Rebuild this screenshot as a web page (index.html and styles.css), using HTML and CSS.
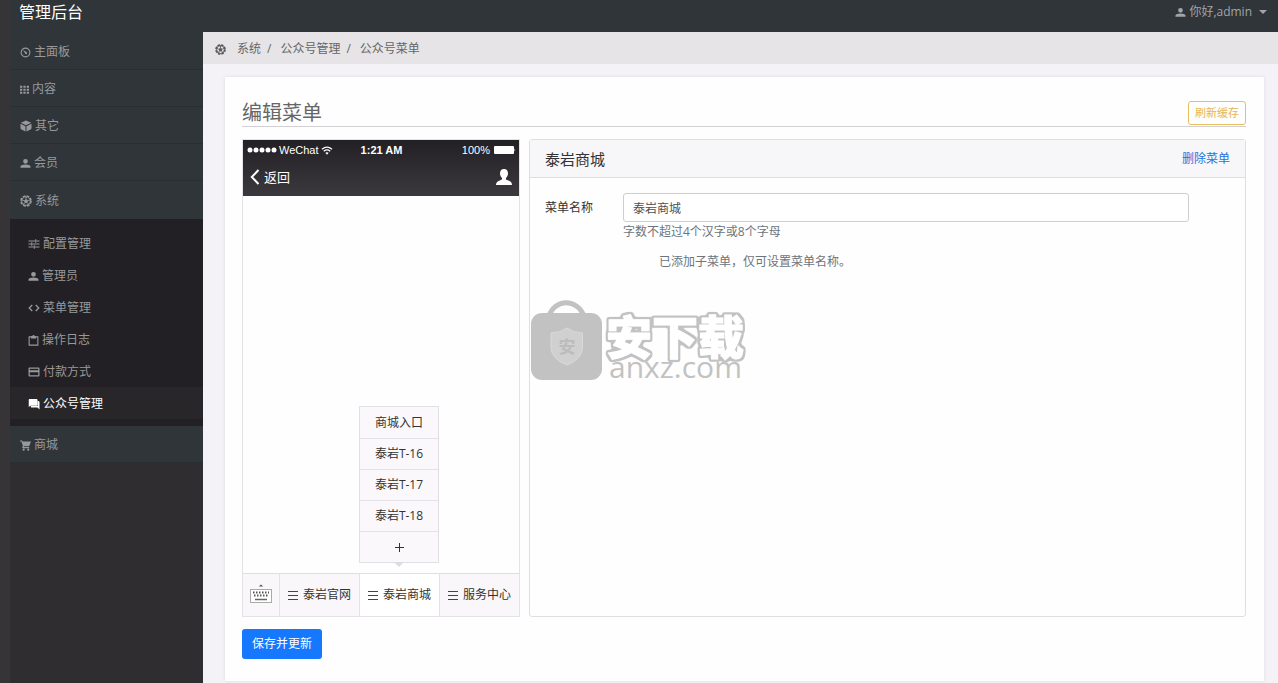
FILE: index.html
```
<!DOCTYPE html>
<html lang="zh-CN">
<head>
<meta charset="utf-8">
<title>管理后台</title>
<link rel="stylesheet" href="styles.css">
</head>
<body>
<svg class="defs" aria-hidden="true">
  <filter id="outline" x="-10%" y="-20%" width="120%" height="140%">
    <feMorphology in="SourceAlpha" operator="dilate" radius="2" result="wide"/>
    <feGaussianBlur in="wide" stdDeviation="0.8" result="soft"/>
    <feComponentTransfer in="soft" result="edge"><feFuncA type="linear" slope="3" intercept="-0.8"/></feComponentTransfer>
    <feFlood flood-color="#c2c2c2"/>
    <feComposite in2="edge" operator="in" result="grey"/>
    <feMerge><feMergeNode in="grey"/><feMergeNode in="SourceGraphic"/></feMerge>
  </filter>
  <symbol id="i-dash" viewBox="0 0 24 24"><circle cx="12" cy="12" r="9.5" fill="none" stroke="currentColor" stroke-width="2.4"/><path d="M6.500 6.500l7.300 4.200a2.300 2.300 0 1 1-2.800 3z" fill="currentColor"/></symbol>
  <symbol id="i-grid" viewBox="0 0 24 24"><path d="M0 2h6v5H0zM9 2h6v5H9zM18 2h6v5h-6zM0 10h6v5H0zM9 10h6v5H9zM18 10h6v5h-6zM0 18h6v5H0zM9 18h6v5H9zM18 18h6v5h-6z" fill="currentColor"/></symbol>
  <symbol id="i-cube" viewBox="0 0 24 24"><path d="M12 1l10.500 4.500L12 10.500 1.500 5.500zM1 7.500l10 4.800V23L3 19.200Q1 18 1 16zM23 7.500l-10 4.800V23l8-3.800q2-1.200 2-3.200z" fill="currentColor"/></symbol>
  <symbol id="i-user" viewBox="0 0 24 24"><path d="M12 2a5.200 5.200 0 0 1 0 10.400a5.200 5.200 0 0 1 0-10.400zM1 21.500v-3c0-3 5.500-4.500 11-4.500s11 1.500 11 4.500v3z" fill="currentColor"/></symbol>
  <symbol id="i-wheel" viewBox="0 0 24 24"><circle cx="12" cy="12" r="10" fill="none" stroke="currentColor" stroke-width="3.200" stroke-dasharray="5.400 2.460"/><circle cx="12" cy="12" r="8.500" fill="none" stroke="currentColor" stroke-width="2"/><path d="M12 9l3 2-1 4h-4l-1-4zM12 3v6M3.500 9.500l5 2M20.500 9.500l-5 2M6.500 19l3.500-4M17.500 19L14 15" fill="currentColor" stroke="currentColor" stroke-width="1.800"/></symbol>
  <symbol id="i-tune" viewBox="0 0 24 24"><path d="M1 6h13M17 6h6M1 12h5M9 12h14M1 18h10M14 18h9M15.500 2.500v7M7.500 8.500v7M12.500 14.500v7" fill="none" stroke="currentColor" stroke-width="2.200"/></symbol>
  <symbol id="i-code" viewBox="0 0 24 24"><path d="M8.500 6L2.500 12l6 6M15.500 6l6 6-6 6" fill="none" stroke="currentColor" stroke-width="2.600"/></symbol>
  <symbol id="i-clip" viewBox="0 0 24 24"><path d="M2.500 4h19v18h-19z" fill="none" stroke="currentColor" stroke-width="2.400"/><path d="M6.500 2.500h3a2.500 2.500 0 0 1 5 0h3v5h-11z" fill="currentColor"/></symbol>
  <symbol id="i-card" viewBox="0 0 24 24"><path d="M3 3h18q2 0 2 2v14q0 2-2 2H3q-2 0-2-2V5q0-2 2-2zM3.500 5.500v3h17v-3zM3.500 12.500v6h17v-6z" fill="currentColor" fill-rule="evenodd"/></symbol>
  <symbol id="i-chat" viewBox="0 0 24 24"><path d="M3 2h14q2 0 2 2v10q0 1.500-1.500 1.500H5L1.500 18V4q0-2 1.500-2zM19.500 6q3.500 0 3.500 2v15l-4-4H7q-1.500 0-1.500-3h14z" fill="currentColor"/></symbol>
  <symbol id="i-cart" viewBox="0 0 24 24"><path d="M0 1h4.500l1 2.500H24l-4 10H9l-1 2h12V18H6q-2-.5-1-2.500l1.500-2.500L3 3.500H0z" fill="currentColor"/><circle cx="8" cy="21" r="2.400" fill="currentColor"/><circle cx="18" cy="21" r="2.400" fill="currentColor"/></symbol>
</svg>
<div class="app">
  <header class="topbar">
    <a class="brand" href="#">管理后台</a>
    <button class="account" type="button"><svg class="icon"><use href="#i-user"/></svg>你好,admin<span class="caret"></span></button>
  </header>
  <nav class="sidebar" aria-label="主导航">
    <div class="nav-group">
      <a class="nav-item" href="#"><svg class="icon"><use href="#i-dash"/></svg>主面板</a>
      <a class="nav-item" href="#"><svg class="icon icon-sm"><use href="#i-grid"/></svg>内容</a>
      <a class="nav-item" href="#"><svg class="icon icon-lg"><use href="#i-cube"/></svg>其它</a>
      <a class="nav-item" href="#"><svg class="icon"><use href="#i-user"/></svg>会员</a>
      <a class="nav-item" href="#"><svg class="icon icon-lg"><use href="#i-wheel"/></svg>系统</a>
    </div>
    <div class="subnav">
      <a class="sub-item" href="#"><svg class="icon icon-lg"><use href="#i-tune"/></svg>配置管理</a>
      <a class="sub-item" href="#"><svg class="icon"><use href="#i-user"/></svg>管理员</a>
      <a class="sub-item" href="#"><svg class="icon icon-lg"><use href="#i-code"/></svg>菜单管理</a>
      <a class="sub-item" href="#"><svg class="icon"><use href="#i-clip"/></svg>操作日志</a>
      <a class="sub-item" href="#"><svg class="icon icon-lg"><use href="#i-card"/></svg>付款方式</a>
      <a class="sub-item active" href="#"><svg class="icon icon-lg"><use href="#i-chat"/></svg>公众号管理</a>
    </div>
    <a class="nav-item" href="#"><svg class="icon"><use href="#i-cart"/></svg>商城</a>
  </nav>
  <main class="main">
    <nav class="crumbs" aria-label="面包屑">
      <svg class="icon"><use href="#i-wheel"/></svg>
      <a href="#">系统</a><span class="sep">/</span><a href="#">公众号管理</a><span class="sep">/</span><span>公众号菜单</span>
    </nav>
    <section class="card">
      <div class="card-head">
        <h1>编辑菜单</h1>
        <button class="refresh" type="button">刷新缓存</button>
      </div>
      <div class="editor">
        <div class="phone">
          <div class="phone-top">
            <div class="status">
              <span class="carrier"><svg class="dots" viewBox="0 0 30 6"><g fill="#fff"><circle cx="3" cy="3" r="2.500"/><circle cx="9" cy="3" r="2.500"/><circle cx="15" cy="3" r="2.500"/><circle cx="21" cy="3" r="2.500"/><circle cx="27" cy="3" r="2.500"/></g></svg>WeChat<svg class="wifi" viewBox="0 0 12 9"><path d="M1 3.200q5-4 10 0M2.800 5.200q3.200-2.500 6.400 0" fill="none" stroke="#fff" stroke-width="1.300"/><path d="M4.300 6.800q1.700-1.300 3.400 0L6 8.700z" fill="#fff"/></svg></span>
              <b>1:21 AM</b>
              <span class="power">100%<svg class="battery" viewBox="0 0 22 8"><rect width="20" height="8" rx="1" fill="#fff"/><path d="M20.500 2.500q1.500 1.500 0 3z" fill="#fff"/></svg></span>
            </div>
            <div class="phone-nav">
              <span class="back"><svg class="chevron" viewBox="0 0 10 16"><path d="M8.500 1L1.800 8l6.700 7" fill="none" stroke="#fff" stroke-width="2"/></svg>返回</span>
              <svg class="person" viewBox="0 0 16 16"><path d="M8 0c2.800 0 4 2 4 4.300 0 2-.8 3.500-2 4.700v1.500c2 1 6 1.600 6 5.500H0c0-3.900 4-4.500 6-5.500V9C4.800 7.800 4 6.300 4 4.300 4 2 5.200 0 8 0z" fill="#fff"/></svg>
            </div>
          </div>
          <div class="phone-body"></div>
          <div class="menubar">
            <button class="kbd" type="button" aria-label="键盘"><svg viewBox="0 0 22 19"><path d="M8.800 2.600L11 .5l2.200 2.100z" fill="#555"/><rect x=".5" y="5.500" width="21" height="13" fill="#fff" stroke="#aaa"/><path d="M3 8.500h16M4 11.500h14" stroke="#555" stroke-width="2" stroke-dasharray="1.500 1.500"/><path d="M5 15.500h12" stroke="#666" stroke-width="1.500"/></svg></button>
            <div class="menu-cell"><button class="menu-btn" type="button"><span class="bars"></span>泰岩官网</button></div>
            <div class="menu-cell current">
              <button class="menu-btn" type="button"><span class="bars"></span>泰岩商城</button>
              <div class="popup">
                <button type="button">商城入口</button>
                <button type="button">泰岩T-16</button>
                <button type="button">泰岩T-17</button>
                <button type="button">泰岩T-18</button>
                <button type="button" aria-label="添加子菜单"><svg class="plus" viewBox="0 0 9 9"><path d="M4.500 0v9M0 4.500h9" stroke="#333"/></svg></button>
              </div>
            </div>
            <div class="menu-cell"><button class="menu-btn" type="button"><span class="bars"></span>服务中心</button></div>
          </div>
        </div>
        <div class="panel">
          <div class="panel-head"><h2>泰岩商城</h2><a href="#">删除菜单</a></div>
          <form class="panel-body">
            <label for="menu-name">菜单名称</label>
            <div class="field">
              <input id="menu-name" type="text" value="泰岩商城">
              <p class="hint">字数不超过4个汉字或8个字母</p>
              <p class="note">已添加子菜单，仅可设置菜单名称。</p>
            </div>
          </form>
        </div>
      </div>
      <button class="save" type="button">保存并更新</button>
    </section>
  </main>
  <svg class="watermark" viewBox="0 0 220 84" aria-hidden="true">
    <path d="M17.500 17C24-2 46-2 53.500 17" fill="none" stroke="#c2c2c2" stroke-width="5"/>
    <rect x="0" y="13" width="71" height="67" rx="11" fill="#c2c2c2"/>
    <path d="M36 28q7 5 15.500 5v14q0 12-15.500 18Q20 59 20 47V33q9 0 16-5z" fill="#d0d0d0" stroke="#dadada"/>
    <text x="36" y="53" text-anchor="middle" class="bag-char">安</text>
    <text x="75" y="54" class="mark-cn" filter="url(#outline)">安下载</text>
    <text x="78" y="78" class="mark-en">anxz.com</text>
  </svg>
</div>
</body>
</html>
```
FILE: styles.css
```
* { box-sizing: border-box; }
body {
  margin: 0;
  background: #f4f2f6;
  color: #333;
  font: 12px/18px "Open Sans", "Noto Sans CJK SC", sans-serif;
}
button, input { font: inherit; color: inherit; margin: 0; }
button { border: 0; padding: 0; background: none; cursor: pointer; }
a { color: inherit; text-decoration: none; }
h1, h2, p { margin: 0; font-weight: 400; }
.defs { position: absolute; width: 0; height: 0; }
.app {
  position: relative;
  display: grid;
  grid-template: 32px 1fr / 193px minmax(0, 1fr);
  min-height: 100vh;
  border-left: 10px solid #363437;
}
.topbar {
  grid-column: 1 / -1;
  display: flex;
  justify-content: space-between;
  align-items: center;
  padding: 0 11px 8px 9px;
  background: #30353a;
}
.brand { color: #fff; font-size: 16px; line-height: 24px; }
.account { display: flex; align-items: center; gap: 3px; color: #a2a4a7; }
.caret { margin-left: 4px; border: 4px solid transparent; border-top-color: #a2a4a7; border-bottom: 0; }
.icon { width: 11px; height: 11px; flex: none; }
.icon-sm { width: 9px; height: 9px; }
.icon-lg { width: 12px; height: 12px; }

.sidebar { background: #2f2d30; color: #98999b; }
.nav-group { padding: 1px 0; background: #30353a; }
.nav-item {
  display: flex;
  align-items: center;
  gap: 3px;
  height: 37px;
  padding: 2px 0 0 10px;
  background: #30353a;
  border-bottom: 1px solid #2a2e32;
}
.nav-group .nav-item:last-child { border-bottom: 0; }
.subnav { padding: 8px 0 7px; background: #222024; }
.sub-item { display: flex; align-items: center; gap: 3px; height: 32px; padding: 2px 0 0 18px; }
.sub-item.active { background: #282629; color: #fff; }

.main { padding-bottom: 2px; }
.crumbs {
  display: flex;
  align-items: center;
  height: 32px;
  padding: 2px 0 0 12px;
  background: #e6e4e7;
  color: #666;
}
.crumbs .icon { margin-right: 11px; color: #555; }
.sep { margin: 0 9px 0 6px; }
.card {
  margin: 13px 14px 0 22px;
  padding: 21px 18px 22px 17px;
  background: #fefefe;
  box-shadow: 0 0 3px #dddbdf;
}
.card-head {
  display: flex;
  justify-content: space-between;
  align-items: center;
  height: 29px;
  padding-top: 2px;
  margin-bottom: 12px;
  border-bottom: 1px solid #d2d0d4;
}
h1 { font-size: 20px; line-height: 28px; color: #666; }
.refresh {
  height: 24px;
  padding: 0 6px;
  border: 1px solid #e8c060;
  border-radius: 3px;
  color: #e8b550;
  font-size: 11px;
  line-height: 16px;
}
.editor { display: flex; gap: 9px; height: 478px; }
.phone { display: flex; flex-direction: column; width: 278px; flex: none; border: 1px solid #e4e2e6; }
.phone-top {
  background: linear-gradient(#222024, #3b393d);
  color: #fff;
  height: 56px;
}
.status {
  display: grid;
  grid-template-columns: 1fr auto 1fr;
  align-items: center;
  height: 20px;
  padding: 0 3px 0 4px;
  font: 11px/16px "Liberation Sans", Arial, sans-serif;
}
.carrier, .power { display: flex; align-items: center; }
.power { justify-content: flex-end; gap: 4px; }
.dots { width: 30px; height: 6px; margin-right: 2px; }
.wifi { width: 12px; height: 9px; margin-left: 2px; }
.battery { width: 22px; height: 8px; }
.phone-nav { display: flex; justify-content: space-between; align-items: center; height: 34px; padding: 0 7px; }
.back { display: flex; align-items: center; gap: 4px; font-size: 13px; }
.chevron { width: 10px; height: 16px; }
.person { width: 16px; height: 16px; }
.phone-body { flex: 1; }
.menubar {
  display: grid;
  grid-template-columns: 36px repeat(3, 1fr);
  height: 43px;
  border-top: 1px solid #e0dee2;
  background: #f9f7fa;
}
.kbd { display: flex; align-items: center; justify-content: center; }
.kbd svg { width: 22px; height: 19px; margin-bottom: 3px; }
.menu-cell { position: relative; border-left: 1px solid #e4e2e6; }
.menu-cell.current { background: #fff; }
.menu-btn { display: flex; align-items: center; justify-content: center; gap: 5px; width: 100%; height: 100%; }
.bars { width: 10px; height: 9px; border-top: 1px solid #444; border-bottom: 1px solid #444; background: linear-gradient(#444, #444) 0 3px / 100% 1px no-repeat; }
.popup {
  position: absolute;
  left: -1px;
  right: 0;
  bottom: calc(100% + 11px);
  border: 1px solid #e2e0e4;
  background: #faf8fb;
}
.popup button { display: flex; align-items: center; justify-content: center; width: 100%; height: 31px; }
.popup button + button { border-top: 1px solid #e4e2e6; }
.popup::after {
  content: "";
  position: absolute;
  top: 100%;
  left: calc(50% - 5px);
  border: 5px solid transparent;
  border-top-color: #dddbdf;
  border-bottom: 0;
}
.plus { width: 9px; height: 9px; }

.panel { flex: 1; min-width: 0; border: 1px solid #e0dee2; border-radius: 3px; }
.panel-head {
  display: flex;
  justify-content: space-between;
  align-items: center;
  height: 38px;
  padding: 1px 15px 0;
  border-bottom: 1px solid #e0dee2;
  background: #f7f6f8;
}
h2 { font-size: 15px; line-height: 22px; }
.panel-head a { color: #2a72dc; }
.panel-body { display: grid; grid-template-columns: 78px minmax(0, 1fr); padding: 15px 56px 15px 15px; }
.panel-body label { line-height: 30px; }
.field input {
  display: block;
  width: 100%;
  height: 29px;
  padding: 0 9px;
  border: 1px solid #cfcdd2;
  border-radius: 3px;
  background: #fff;
  color: #495057;
}
.hint, .note { color: #6c757d; }
.hint { margin-top: 1px; }
.note { margin: 12px 0 0 36px; }
.save {
  display: block;
  height: 30px;
  margin-top: 12px;
  padding: 0 10px;
  border-radius: 3px;
  background: #1677ff;
  color: #fff;
}

.watermark { position: absolute; left: 521px; top: 300px; width: 220px; height: 84px; pointer-events: none; }
.bag-char { font: 700 17px "Noto Sans CJK SC", sans-serif; fill: #bcbcbc; }
.mark-cn { font: 900 46px "Noto Sans CJK SC", sans-serif; fill: #fff; stroke: #fff; stroke-width: 1px; stroke-linejoin: round; }
.mark-en { font-size: 30px; fill: #c2c2c2; }
```
